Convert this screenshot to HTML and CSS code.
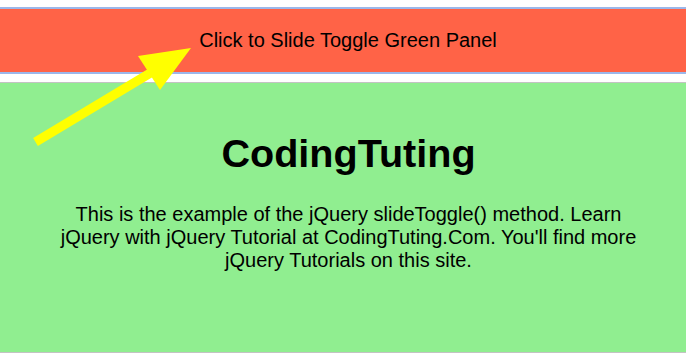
FILE: index.html
```html
<!DOCTYPE html>
<html lang="en">
<head>
<meta charset="utf-8">
<title>jQuery slideToggle</title>
<link rel="stylesheet" href="styles.css">
</head>
<body>
<div class="page">
  <div class="flip">Click to Slide Toggle Green Panel</div>
  <div class="panel">
    <h1 class="title">CodingTuting</h1>
    <p class="text">This is the example of the jQuery slideToggle() method. Learn jQuery with jQuery Tutorial at CodingTuting.Com. You'll find more jQuery Tutorials on this site.</p>
  </div>
  <svg class="arrow" width="686" height="360" viewBox="0 0 686 360" aria-hidden="true">
    <line x1="35.5" y1="142" x2="152" y2="72" stroke="#ffff00" stroke-width="9.2" stroke-linecap="butt"/>
    <polygon points="191,48 138,56 160,90" fill="#ffff00"/>
  </svg>
</div>
</body>
</html>
```

FILE: styles.css
```css
html, body {
  margin: 0;
  padding: 0;
  background: #ffffff;
}

body {
  font-family: "Liberation Sans", Arial, sans-serif;
  font-size: 20px;
  line-height: 23px;
  color: #000000;
}

.page {
  position: relative;
  width: 686px;
  height: 360px;
  overflow: hidden;
  padding-top: 7px;
  box-sizing: border-box;
}

.flip {
  background: #ff6347;
  border-top: 2px solid #9cb7ea;
  border-bottom: 2px solid #9cb7ea;
  padding: 20px 0 20px 10px;
  text-align: center;
}

.panel {
  margin-top: 8px;
  background: #90ee90;
  border-top: 1px solid #c3c3c3;
  border-bottom: 1px solid #c3c3c3;
  height: 229px;
  padding: 20px 40px 20px 51px;
  text-align: center;
}

.title {
  font-size: 39.6px;
  line-height: 46px;
  font-weight: bold;
  margin: 26.8px 0 26.8px;
}

.text {
  margin: 0;
}

.arrow {
  position: absolute;
  left: 0;
  top: 0;
}
```
